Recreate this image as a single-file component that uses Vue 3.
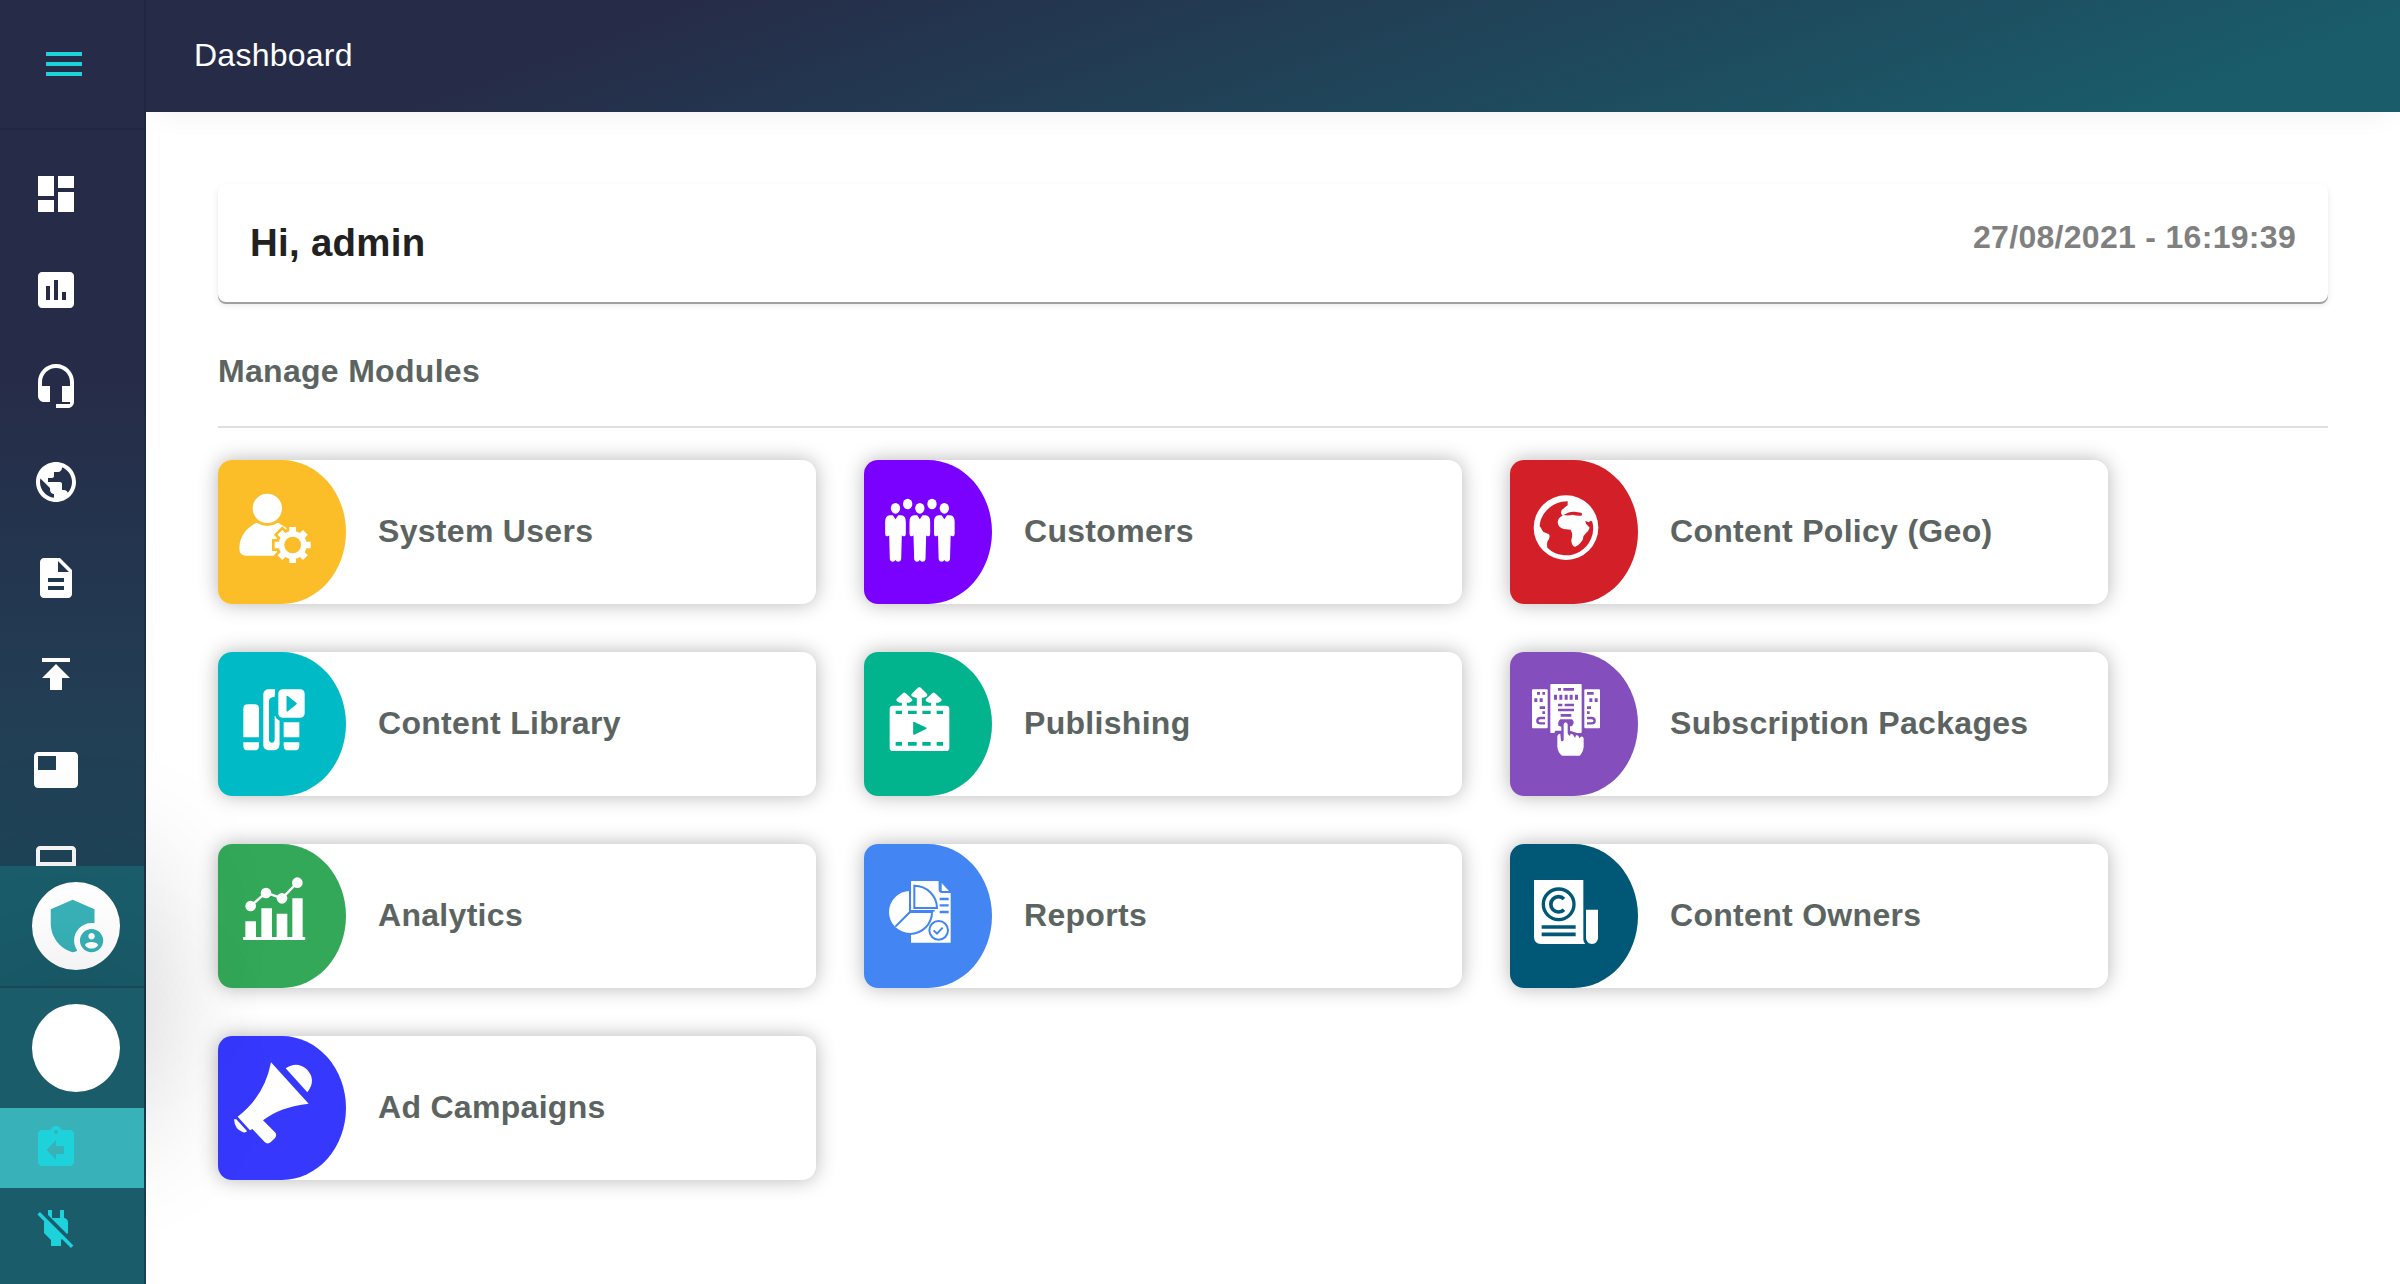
<script setup>
const navIcons = [
  { id: 'dashboard', d: 'M3 13h8V3H3v10zm0 8h8v-6H3v6zm10 0h8V11h-8v10zm0-18v6h8V3h-8z' },
  { id: 'stats', d: 'M19 3H5c-1.1 0-2 .9-2 2v14c0 1.1.9 2 2 2h14c1.1 0 2-.9 2-2V5c0-1.1-.9-2-2-2zM9 17H7v-7h2v7zm4 0h-2V7h2v10zm4 0h-2v-4h2v4z' },
  { id: 'support', d: 'M12 1c-4.97 0-9 4.03-9 9v7c0 1.66 1.34 3 3 3h3v-8H5v-2c0-3.87 3.13-7 7-7s7 3.13 7 7v2h-4v8h4v1h-7v2h6c1.66 0 3-1.34 3-3V10c0-4.97-4.03-9-9-9z' },
  { id: 'geo', d: 'M12 2C6.48 2 2 6.48 2 12s4.48 10 10 10 10-4.48 10-10S17.52 2 12 2zm-1 17.93c-3.95-.49-7-3.85-7-7.93 0-.62.08-1.21.21-1.79L9 15v1c0 1.1.9 2 2 2v1.93zm6.9-2.54c-.26-.81-1-1.39-1.9-1.39h-1v-3c0-.55-.45-1-1-1H8v-2h2c.55 0 1-.45 1-1V7h2c1.1 0 2-.9 2-2v-.41c2.93 1.19 5 4.06 5 7.41 0 2.08-.8 3.97-2.1 5.39z' },
  { id: 'content', d: 'M14 2H6c-1.1 0-1.99.9-1.99 2L4 20c0 1.1.89 2 1.99 2H18c1.1 0 2-.9 2-2V8l-6-6zm2 16H8v-2h8v2zm0-4H8v-2h8v2zm-3-5V3.5L18.5 9H13z' },
  { id: 'publish', d: 'M5 4v2h14V4H5zm0 10h4v6h6v-6h4l-7-7-7 7z' },
  { id: 'packages', d: 'M21 3H3c-1.1 0-2 .9-2 2v14c0 1.1.9 2 2 2h18c1.1 0 2-.9 2-2V5c0-1.1-.9-2-2-2zm-9 9H3V5h9v7z' },
  { id: 'ads', d: 'M20 2H4c-1.1 0-2 .9-2 2v16c0 1.1.9 2 2 2h16c1.1 0 2-.9 2-2V4c0-1.1-.9-2-2-2zm0 8H4V4h16v6z' },
]

const person = 'M-31 186Q-31 166-17 166H-8L0 178L8 166H17Q31 166 31 186V221Q31 229 25 229Q20 229 19 226L17 298Q16 305 9 305Q2 305 0 300Q-2 305-9 305Q-16 305-17 298L-19 226Q-20 229-25 229Q-31 229-31 221Z'
const spokes = (len, w, color) =>
  [0, 45, 90, 135].map(a => `<path d="M0 ${-len}V${len}" transform="rotate(${a})" stroke="${color}" stroke-width="${w}"/>`).join('')

// Glyphs are drawn on a 384x432 tile; currentColor is the tile colour.
const modules = [
  {
    name: 'System Users', color: '#fbbe28',
    art: `<circle cx="148" cy="145" r="44"/><path d="M116 188Q148 208 180 188L212 208V287H86Q64 287 64 266C64 226 90 200 116 188Z"/>
      <g transform="translate(224 255)"><circle r="51" fill="currentColor"/>${spokes(62, 36, 'currentColor')}<circle r="42"/>${spokes(54, 20, '#fff')}<circle r="25" fill="currentColor"/></g>`,
  },
  {
    name: 'Customers', color: '#7a00ff',
    art: `<ellipse cx="131" cy="132" rx="14" ry="16"/><ellipse cx="204" cy="132" rx="14" ry="16"/>` +
      [94.5, 167.5, 241].map(x => `<g transform="translate(${x})"><ellipse cy="145" rx="14" ry="16"/><path d="${person}"/></g>`).join(''),
  },
  {
    name: 'Content Policy (Geo)', color: '#d31f27',
    art: `<g transform="translate(30 60)"><circle cx="138" cy="143" r="97"/>
      <path fill="currentColor" d="M143 64C100 64 61 97 59 139Q63 143 66 150Q70 159 78 159L87 163Q92 172 83 183Q80 190 82 203A81 81 0 0 0 217 125L213 122L205 127L196 122L198 131L209 143Q206 152 199 158L190 169Q191 180 181 189Q174 198 166 200Q158 200 156 191Q152 182 156 172Q158 160 152 149L131 147Q114 142 113 127Q114 112 128 107Q120 101 125 91Q133 82 143 76Z"/>
      <path fill="currentColor" d="M130 105Q148 94 163 95L184 98Q189 103 184 107Q168 108 158 104Q146 108 130 105Z"/></g>`,
  },
  {
    name: 'Content Library', color: '#00bbc6',
    art: `<path d="M76 256V170Q76 157 89 157H110Q123 157 123 170V256ZM76 271H123V281Q123 295 109 295H90Q76 295 76 281Z"/>
      <rect x="136" y="112" width="48" height="183" rx="15"/><path fill="currentColor" d="M153 146Q153 136 171 134V264Q169 272 162 272Q154 272 153 264Z"/>
      <path fill="currentColor" d="M172 100H190V207Q171 204 170 184V138Z"/>
      <path d="M170 191Q175 203 184 207V280H170Z"/>
      <rect x="181" y="112" width="79" height="85" rx="13"/><path fill="currentColor" stroke="currentColor" stroke-width="5" stroke-linejoin="round" d="M208 134L234 155L208 176Z"/>
      <path d="M197 211H244V256H197ZM197 271H244V281Q244 295 230 295H211Q197 295 197 281Z"/>`,
  },
  {
    name: 'Publishing', color: '#02b48d',
    art: `<rect x="77" y="161" width="179" height="136" rx="10"/>
      <g stroke="#fff" stroke-width="15"><path d="M121 140V165M166 125V165M209 140V165"/></g>
      <g stroke="#fff" stroke-width="10" stroke-linejoin="round"><path d="M121 127L140 144L134 147H108L102 144ZM166 110L185 129L178 132H154L147 129ZM209 127L228 144L222 147H196L190 144Z"/></g>
      <g fill="currentColor"><path d="M95 176h19v10h-19zM132 176h26v10h-26zM175 176h25v10h-25zM218 176h19v10h-19zM95 270h19v11h-19zM132 270h26v11h-26zM175 270h25v11h-25zM218 270h19v11h-19z"/></g>
      <path fill="currentColor" stroke="currentColor" stroke-width="5" stroke-linejoin="round" d="M150 212L185 229L150 246Z"/>`,
  },
  {
    name: 'Subscription Packages', color: '#844fbd',
    art: `<g transform="translate(30 -516)"><rect x="36" y="628" width="47" height="117" rx="3"/><rect x="193" y="628" width="47" height="117" rx="3"/><rect x="91" y="612" width="94" height="147" rx="3"/>
      <g fill="currentColor"><path d="M51 636h9v8h-9zM67 636h8v8h-8zM43 655h9v11h-9zM59 655h9v11h-9zM59 679h16v8h-16zM67 694h8v8h-8z"/>
      <path d="M201 636h20v8h-20zM208 655h9v11h-9zM224 655h9v11h-9zM201 679h12v8h-12zM201 694h8v8h-8z"/>
      <path d="M114 624h9v8h-9zM130 624h32v8h-32zM102 644h9v15h-9zM118 644h9v15h-9zM134 644h9v15h-9zM149 644h9v15h-9zM165 644h9v15h-9zM114 671h13v8h-13zM134 671h28v8h-28zM114 686h48v8h-48zM122 702h32v8h-32z"/></g>
      <path fill="none" stroke="currentColor" stroke-width="7" d="M75 714H62Q52 714 52 722Q52 730 62 730H75M201 714H214Q224 714 224 722Q224 730 214 730H201"/>
      <path fill="currentColor" d="M121 718H156Q162 722 161 730L156 739H150V752L188 764V759L198 770H98L106 752H124V740L115 737Q113 724 121 718Z"/>
      <path d="M131 732Q137 722 143 732V760Q146 768 150 768L151 763Q159 760 162 769L165 774L168 766Q176 764 178 775L183 770Q190 768 191 776V801Q189 818 179 827H126Q113 816 112 800V770Q112 762 121 761L123 782Q128 786 131 780Z"/></g>`,
  },
  {
    name: 'Analytics', color: '#33a858',
    art: `<path d="M82 232h32v50h-32zM130 193h32v88h-32zM176 209h32v72h-32zM223 163h31v118h-31z"/><rect x="75" y="279" width="187" height="9" rx="3"/>
      <path d="M98 186L144 146L192 163L238 116" fill="none" stroke="#fff" stroke-width="7"/><circle cx="98" cy="186" r="16"/><circle cx="144" cy="147" r="16"/><circle cx="192" cy="163" r="16"/><circle cx="238" cy="116" r="16"/>`,
  },
  {
    name: 'Reports', color: '#4285f3',
    art: `<g transform="translate(-42 -72)"><path d="M183 184H266V210Q268 218 276 219H302V368H183Z"/><path d="M275 189L297 213H275Z"/>
      <g fill="#fff" stroke="currentColor" stroke-width="6"><circle cx="180" cy="276" r="66"/></g><path fill="currentColor" d="M177 200H254V275H177Z"/><path d="M183 184H266V200H268V228H296V236H262V270H183Z"/>
      <path fill="#fff" stroke="currentColor" stroke-width="6" d="M193 197V264H261A68 68 0 0 0 193 197Z"/>
      <path fill="none" stroke="currentColor" stroke-width="6" d="M136 320L180 276V211M180 276H248"/>
      <g stroke="currentColor" stroke-width="7"><path d="M269 237H296M269 256H296M269 276H296"/></g>
      <circle cx="266" cy="331" r="28" fill="#fff" stroke="currentColor" stroke-width="6"/><path d="M251 331L261 341L278 323" fill="none" stroke="currentColor" stroke-width="6"/>
      <path fill="currentColor" d="M266 184H270V206Q271 213 278 214H302V219H276Q267 218 266 210Z"/></g>`,
  },
  {
    name: 'Content Owners', color: '#005876',
    art: `<g transform="translate(-60 -72)"><path d="M132 180H280V358Q280 366 286 372H153Q132 371 132 350Z"/><path d="M288 269H324V354Q323 371 306 372Q289 371 288 354Z"/>
      <g fill="none" stroke="currentColor"><circle cx="206" cy="253" r="46" stroke-width="10"/><path d="M222 237A23 23 0 1 0 222 269" stroke-width="11"/><path d="M155 321H257M155 343H257" stroke-width="11"/></g></g>`,
  },
  {
    name: 'Ad Campaigns', color: '#3639fd',
    art: `<path d="M159 79L272 203Q185 213 135 253L171 289Q178 296 171 306L158 319Q148 326 140 318L103 279L96 283L59 242Q140 180 159 79Z"/>
      <path d="M48 250H55L87 285Q86 290 75 289Q50 280 48 250Z"/><path d="M203 97Q237 74 266 100Q297 132 268 169Z"/>`,
  },
]
</script>

<template>
  <div class="app">
    <aside class="sidebar">
      <div class="toggle">
        <svg viewBox="0 0 24 24"><path d="M3 18h18v-2H3v2zm0-5h18v-2H3v2zm0-7v2h18V6H3z" /></svg>
      </div>
      <nav class="nav">
        <a v-for="i in navIcons" :key="i.id" class="nav-item">
          <svg viewBox="0 0 24 24"><path :d="i.d" /></svg>
        </a>
      </nav>
      <div class="panel role">
        <span class="avatar">
          <svg viewBox="0 0 24 24">
            <path d="M17 11c.34 0 .67.04 1 .09V6.27L10.5 3 3 6.27v4.91c0 4.54 3.2 8.79 7.5 9.82.55-.13 1.08-.32 1.6-.55C11.41 19.47 11 18.28 11 17c0-3.31 2.69-6 6-6z" />
            <path d="M17 13c-2.21 0-4 1.79-4 4s1.79 4 4 4 4-1.79 4-4-1.79-4-4-4zm0 1.38c.62 0 1.12.51 1.12 1.12s-.51 1.12-1.12 1.12-1.12-.51-1.12-1.12.5-1.12 1.12-1.12zm0 5.37c-.93 0-1.74-.46-2.24-1.17.05-.72 1.51-1.08 2.24-1.08s2.19.36 2.24 1.08c-.5.71-1.31 1.17-2.24 1.17z" />
          </svg>
        </span>
      </div>
      <div class="panel user"><span class="avatar"></span></div>
      <div class="action active">
        <svg viewBox="0 0 24 24"><path d="M19 3h-4.18C14.4 1.84 13.3 1 12 1c-1.3 0-2.4.84-2.82 2H5c-1.1 0-2 .9-2 2v14c0 1.1.9 2 2 2h14c1.1 0 2-.9 2-2V5c0-1.1-.9-2-2-2zm-7 0c.55 0 1 .45 1 1s-.45 1-1 1-1-.45-1-1 .45-1 1-1zm4 12h-4v3l-4.7-5 4.7-5v3h4v4z" /></svg>
      </div>
      <div class="action last">
        <svg viewBox="0 0 24 24"><path d="M18 14.49V9c0-1-1.01-2.01-2-2V3h-2v4h-4V3H8v2.48l9.51 9.5.49-.49zm-1.76 1.77L7.2 7.2l-.01.01L3.98 4 2.71 5.25l3.36 3.36C6.04 8.74 6 8.87 6 9v5.48L9.5 18v3h5v-3l.48-.48L19.45 22l1.26-1.28-4.47-4.46z" /></svg>
      </div>
    </aside>

    <div class="page">
      <header class="topbar"><h1>Dashboard</h1></header>
      <main class="content">
        <section class="greeting">
          <h2>Hi, admin</h2>
          <time>27/08/2021 - 16:19:39</time>
        </section>
        <h3 class="section-title">Manage Modules</h3>
        <div class="grid">
          <article v-for="m in modules" :key="m.name" class="card">
            <div class="tile" :style="{ color: m.color }">
              <svg viewBox="0 0 384 432" fill="#fff" v-html="m.art"></svg>
            </div>
            <span class="label">{{ m.name }}</span>
          </article>
        </div>
      </main>
    </div>
  </div>
</template>

<style>
body { margin: 0; background: #fff; }
</style>

<style scoped>
.app {
  display: flex;
  height: 1284px;
  overflow: hidden;
  font-family: "Liberation Sans", Arial, sans-serif;
  background: #fff;
}
.sidebar {
  position: relative;
  z-index: 2;
  display: flex;
  flex-direction: column;
  box-sizing: border-box;
  width: 146px;
  flex: none;
  border-right: 2px solid rgba(24, 36, 60, .45);
  background: linear-gradient(180deg, #262c48 30%, #1a5c6a 100%) border-box;
}
.toggle {
  box-sizing: border-box;
  height: 130px;
  flex: none;
  padding: 40px;
  border-bottom: 2px solid rgba(24, 36, 60, .45);
}
svg { display: block; width: 48px; height: 48px; }
.toggle svg, .action svg { fill: #1ed2db; }
.nav {
  display: flex;
  flex-direction: column;
  height: 720px;
  padding-top: 16px;
  overflow: hidden;
}
.nav-item {
  display: flex;
  align-items: center;
  height: 96px;
  flex: none;
  padding-left: 32px;
}
.nav-item svg { fill: #fff; }
.panel {
  position: relative;
  box-sizing: border-box;
  flex: none;
  padding: 16px 0 0 32px;
  background: #1a5c6a;
  box-shadow: 0 10px 120px 20px rgba(0, 0, 0, .12);
}
.role { height: 122px; border-bottom: 2px solid #1f4a5e; }
.user { height: 120px; }
.avatar {
  display: flex;
  box-sizing: border-box;
  width: 88px;
  height: 88px;
  padding: 9px 10px;
  border-radius: 50%;
  background: #fff;
}
.avatar svg { width: 70px; height: 70px; flex: none; fill: #38b2b8; }
.action {
  position: relative;
  display: flex;
  align-items: center;
  height: 80px;
  padding-left: 32px;
}
.active { background: #38b2b8; }
.last { flex: 1; align-items: flex-start; padding-top: 16px; background: #1a5c6a; }
.page { flex: 1; min-width: 0; }
.topbar {
  display: flex;
  align-items: center;
  box-sizing: border-box;
  height: 112px;
  padding: 0 0 2px 48px;
  background: linear-gradient(160deg, #262c48 22%, #1a5c6a 90%);
  box-shadow: 0 10px 28px -10px rgba(0, 0, 0, .07);
}
h1, h2, h3 { margin: 0; }
h1 { font-size: 32px; font-weight: 400; color: #fff; letter-spacing: .25px; }
.content { padding: 72px; }
.greeting {
  display: flex;
  justify-content: space-between;
  box-sizing: border-box;
  height: 118px;
  padding: 0 32px;
  border-radius: 8px;
  background: #fff;
  box-shadow: 0 2px 0 #a0a0a0, 0 3px 6px rgba(0, 0, 0, .1);
}
h2 { font-size: 38.4px; line-height: 118px; letter-spacing: .3px; color: #212121; }
time { font-size: 32px; line-height: 106px; font-weight: 700; letter-spacing: .3px; color: #808080; }
.section-title {
  box-sizing: border-box;
  height: 126px;
  padding-top: 50px;
  border-bottom: 2px solid #e0e0e0;
  font-size: 32px;
  line-height: 38px;
  letter-spacing: .3px;
  color: #5c6462;
}
.grid {
  display: grid;
  grid-template-columns: repeat(3, 598px);
  gap: 48px;
  padding-top: 32px;
}
.card {
  display: flex;
  align-items: center;
  height: 144px;
  border-radius: 14px;
  background: #fff;
  box-shadow: 0 0 20px rgba(0, 0, 0, .29);
}
.tile {
  width: 128px;
  height: 144px;
  border-radius: 14px 64px 64px 14px / 14px 72px 72px 14px;
  background: currentColor;
}
.tile svg { width: 128px; height: 144px; }
.label {
  padding: 0 0 1px 32px;
  font-size: 32px;
  font-weight: 700;
  letter-spacing: .3px;
  color: #5c6462;
}
</style>
